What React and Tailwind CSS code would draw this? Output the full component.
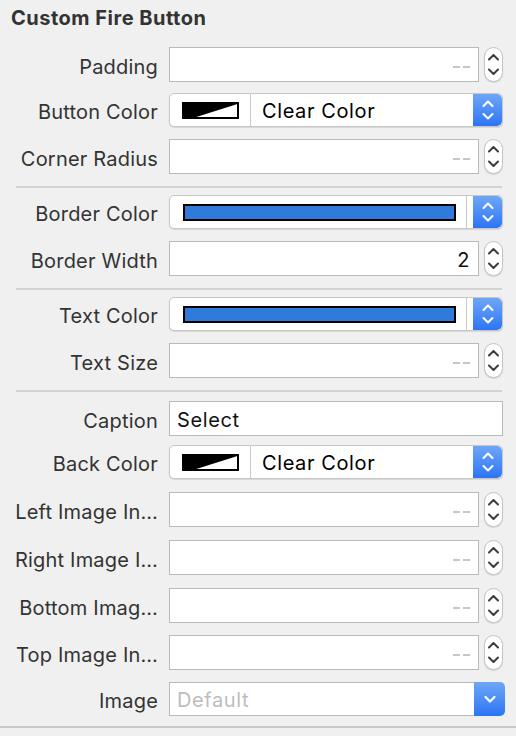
import React from "react";

const font = { fontFamily: "Inter, 'Noto Sans', sans-serif" };

function Stepper() {
  return (
    <div className="w-[19px] h-[35px] rounded-full bg-white border border-[#c4c4c4] shadow-[0_1px_1px_rgba(0,0,0,0.12)] flex items-center justify-center">
      <svg width="17" height="33" viewBox="0 0 17 33" fill="none">
        <path d="M4 11.5 L8.5 7 L13 11.5" stroke="#3c3c3c" strokeWidth="2" strokeLinecap="round" strokeLinejoin="round" />
        <path d="M4 21.5 L8.5 26 L13 21.5" stroke="#3c3c3c" strokeWidth="2" strokeLinecap="round" strokeLinejoin="round" />
      </svg>
    </div>
  );
}

function BlueArrows() {
  return (
    <div className="w-[29px] h-full rounded-r-[5px] bg-gradient-to-b from-[#6ea6f7] to-[#2c74f4] flex items-center justify-center">
      <svg width="14" height="24" viewBox="0 0 14 24" fill="none">
        <path d="M2.5 8 L7 3.5 L11.5 8" stroke="white" strokeWidth="2" strokeLinecap="round" strokeLinejoin="round" />
        <path d="M2.5 16 L7 20.5 L11.5 16" stroke="white" strokeWidth="2" strokeLinecap="round" strokeLinejoin="round" />
      </svg>
    </div>
  );
}

function NumberField({ value }) {
  return (
    <div className="flex items-center gap-[5px]">
      <div className="w-[310px] h-[35px] bg-white border border-[#b9b9b9] flex items-center justify-end pr-[8px]">
        {value ? (
          <span className="text-[20px] tracking-[0.6px] text-[#111] pt-[2px]">{value}</span>
        ) : (
          <span className="flex gap-[3px] mt-[4px]">
            <span className="w-[7px] h-[2px] bg-[#c6c6c6]"></span>
            <span className="w-[7px] h-[2px] bg-[#c6c6c6]"></span>
          </span>
        )}
      </div>
      <Stepper />
    </div>
  );
}

function ClearSwatch() {
  return (
    <svg width="57" height="17" viewBox="0 0 57 17">
      <rect x="1" y="1" width="55" height="15" fill="white" stroke="black" strokeWidth="2" />
      <polygon points="0,0 57,0 57,1.5 8,17 0,17" fill="black" />
    </svg>
  );
}

function ColorPopup({ clear, label }) {
  if (clear) {
    return (
      <div className="w-[334px] h-[34px] bg-white rounded-[5px] border border-[#c6c6c6] shadow-[0_1px_1px_rgba(0,0,0,0.1)] flex items-stretch overflow-hidden">
        <div className="w-[81px] flex items-center justify-center border-r border-[#c9c9c9]">
          <ClearSwatch />
        </div>
        <div className="flex-1 flex items-center pl-[11px] pt-[2px] text-[20px] tracking-[0.6px] text-black">{label}</div>
        <BlueArrows />
      </div>
    );
  }
  return (
    <div className="w-[334px] h-[34px] bg-white rounded-[5px] border border-[#c6c6c6] shadow-[0_1px_1px_rgba(0,0,0,0.1)] flex items-stretch overflow-hidden">
      <div className="w-[297px] flex items-center justify-end pr-[10px] border-r border-[#c9c9c9]">
        <div className="w-[273px] h-[17px] bg-[#2f7bdc] border-2 border-black"></div>
      </div>
      <div className="w-[6px]"></div>
      <BlueArrows />
    </div>
  );
}

function Row({ label, mt, children }) {
  return (
    <div className={`flex items-center ${mt}`}>
      <div className="w-[159px] text-right text-[20px] tracking-[0.2px] text-[#333] pr-[1px] pt-[4px] whitespace-nowrap">{label}</div>
      <div className="ml-[10px]">{children}</div>
    </div>
  );
}

function Sep({ mt }) {
  return <div className={`ml-[16px] w-[486px] h-[2px] bg-[#d3d3d3] ${mt}`}></div>;
}

export default function App() {
  return (
    <div className="w-[516px] h-[736px] bg-[#f0f0f0] overflow-hidden" style={font}>
      <div className="pt-[8px] pl-[11px] h-[28px] text-[20px] tracking-[0.5px] leading-[20px] font-bold text-[#333]">
        Custom Fire Button
      </div>

      <Row label="Padding" mt="mt-[19px]">
        <NumberField />
      </Row>
      <Row label="Button Color" mt="mt-[11px]">
        <ColorPopup clear label="Clear Color" />
      </Row>
      <Row label="Corner Radius" mt="mt-[12px]">
        <NumberField />
      </Row>

      <Sep mt="mt-[12px]" />

      <Row label="Border Color" mt="mt-[7px]">
        <ColorPopup />
      </Row>
      <Row label="Border Width" mt="mt-[12px]">
        <NumberField value="2" />
      </Row>

      <Sep mt="mt-[12px]" />

      <Row label="Text Color" mt="mt-[7px]">
        <ColorPopup />
      </Row>
      <Row label="Text Size" mt="mt-[12px]">
        <NumberField />
      </Row>

      <Sep mt="mt-[12px]" />

      <Row label="Caption" mt="mt-[9px]">
        <div className="w-[334px] h-[35px] bg-white border border-[#b9b9b9] flex items-center pl-[7px] pt-[2px] text-[20px] tracking-[0.6px] text-[#111]">
          Select
        </div>
      </Row>
      <Row label="Back Color" mt="mt-[9px]">
        <ColorPopup clear label="Clear Color" />
      </Row>
      <Row label="Left Image In…" mt="mt-[13px]">
        <NumberField />
      </Row>
      <Row label="Right Image I…" mt="mt-[13px]">
        <NumberField />
      </Row>
      <Row label="Bottom Imag…" mt="mt-[13px]">
        <NumberField />
      </Row>
      <Row label="Top Image In…" mt="mt-[12px]">
        <NumberField />
      </Row>
      <Row label="Image" mt="mt-[12px]">
        <div className="w-[336px] h-[34px] flex items-stretch">
          <div className="flex-1 bg-white border border-[#b9b9b9] border-r-0 flex items-center pl-[7px] pt-[2px] text-[20px] tracking-[0.6px] text-[#bdbdbd]">
            Default
          </div>
          <div className="w-[31px] h-full rounded-r-[5px] bg-gradient-to-b from-[#6ea6f7] to-[#2c74f4] flex items-center justify-center">
            <svg width="14" height="10" viewBox="0 0 14 10" fill="none">
              <path d="M2.5 3 L7 7.5 L11.5 3" stroke="white" strokeWidth="2.2" strokeLinecap="round" strokeLinejoin="round" />
            </svg>
          </div>
        </div>
      </Row>

      <div className="mt-[10px] w-full h-[2px] bg-[#c8c8c8]"></div>
    </div>
  );
}
